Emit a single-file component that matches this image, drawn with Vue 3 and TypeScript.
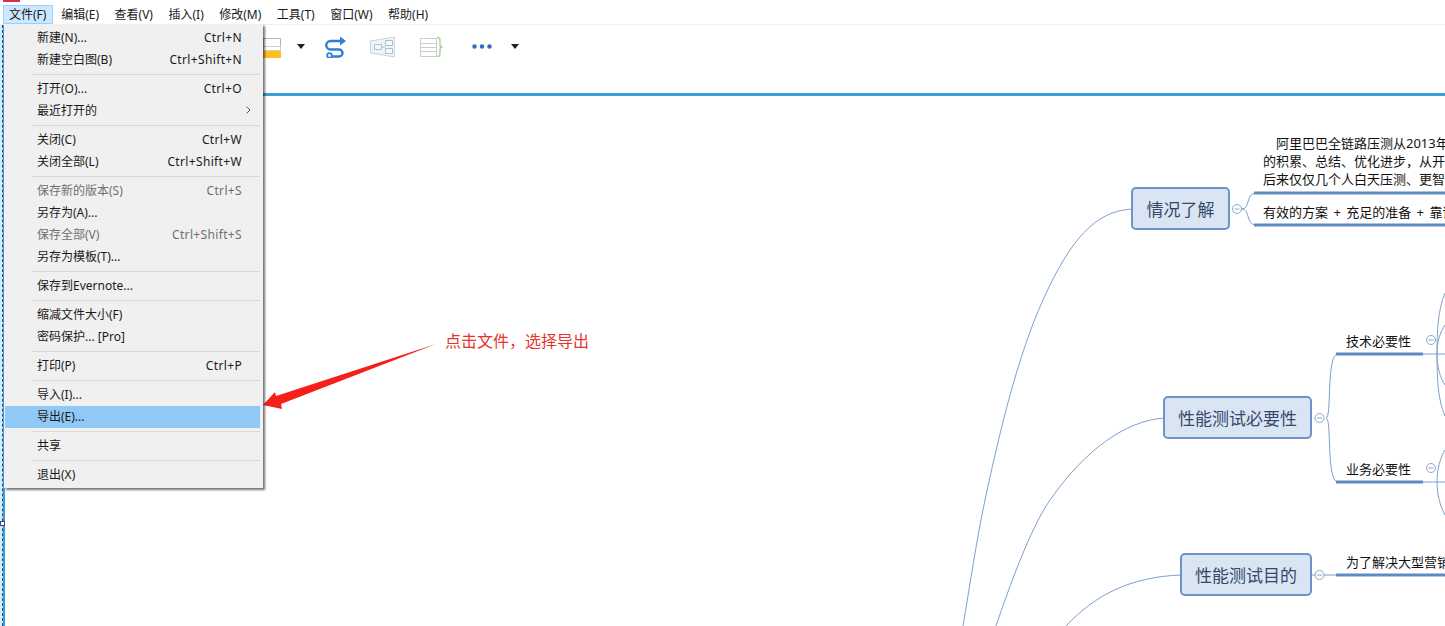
<script setup lang="ts">
interface MenuRow {
  label: string
  key?: string
  disabled?: boolean
  active?: boolean
  sub?: boolean
}

interface MapBox {
  text: string
  x: number
  y: number
  w: number
  h: number
}

interface MapText {
  text: string
  x: number
  y: number
}

const menuBar = ['文件(F)', '编辑(E)', '查看(V)', '插入(I)', '修改(M)', '工具(T)', '窗口(W)', '帮助(H)']

const menuGroups: MenuRow[][] = [
  [
    { label: '新建(N)...', key: 'Ctrl+N' },
    { label: '新建空白图(B)', key: 'Ctrl+Shift+N' }
  ],
  [
    { label: '打开(O)...', key: 'Ctrl+O' },
    { label: '最近打开的', sub: true }
  ],
  [
    { label: '关闭(C)', key: 'Ctrl+W' },
    { label: '关闭全部(L)', key: 'Ctrl+Shift+W' }
  ],
  [
    { label: '保存新的版本(S)', key: 'Ctrl+S', disabled: true },
    { label: '另存为(A)...' },
    { label: '保存全部(V)', key: 'Ctrl+Shift+S', disabled: true },
    { label: '另存为模板(T)...' }
  ],
  [{ label: '保存到Evernote...' }],
  [{ label: '缩减文件大小(F)' }, { label: '密码保护... [Pro]' }],
  [{ label: '打印(P)', key: 'Ctrl+P' }],
  [{ label: '导入(I)...' }, { label: '导出(E)...', active: true }],
  [{ label: '共享' }],
  [{ label: '退出(X)' }]
]

// map coordinates are canvas-relative, the canvas starts at y = 96
const topics: MapBox[] = [
  { text: '情况了解', x: 1131, y: 91, w: 99, h: 43 },
  { text: '性能测试必要性', x: 1163, y: 300, w: 149, h: 43 },
  { text: '性能测试目的', x: 1180, y: 457, w: 132, h: 43 }
]

const notes: MapText[] = [
  { text: '阿里巴巴全链路压测从2013年', x: 1276, y: 38 },
  { text: '的积累、总结、优化进步，从开', x: 1263, y: 56 },
  { text: '后来仅仅几个人白天压测、更智', x: 1263, y: 74 },
  { text: '有效的方案 + 充足的准备 + 靠谱', x: 1263, y: 107 },
  { text: '技术必要性', x: 1346, y: 236 },
  { text: '业务必要性', x: 1346, y: 364 },
  { text: '为了解决大型营销', x: 1346, y: 457 }
]

const thinLines = [
  'M1132 209 C1095 211 1070 240 1043 300 C1018 355 1000 430 985 500 C976.5 540 970 585 963 626',
  'M1164 418 C1125 421 1085 450 1050 500 C1030 529 1010 585 996 626',
  'M1181 575 C1130 577 1095 595 1066 626',
  'M1242 209 C1250 209 1246 193 1256 193',
  'M1242 209 C1250 209 1246 225 1256 225',
  'M1326 418 C1332 418 1326 354 1338 354',
  'M1326 418 C1332 418 1326 482 1338 482',
  'M1312 575 H1336',
  'M1423 354 H1445',
  'M1423 482 H1445',
  'M1445 293 C1438 310 1437 330 1437 354 C1437 380 1438 400 1445 416',
  'M1445 325 C1440 332 1437 342 1437 354 C1437 366 1440 378 1445 385',
  'M1445 450 C1440 458 1437 470 1437 482 C1437 494 1440 506 1445 515'
]

const thickLines = [
  [1254, 193, 1445],
  [1254, 225, 1445],
  [1336, 354, 1423],
  [1336, 482, 1423],
  [1336, 575, 1445]
]

const toggles = [
  [1237, 209],
  [1319.5, 418],
  [1431, 340],
  [1431, 468],
  [1319.5, 575]
]
</script>

<template>
  <div class="app">
    <i class="red-tab"></i>

    <nav class="menubar">
      <span v-for="(item, i) in menuBar" :key="item" class="bar-item" :class="{ open: i === 0 }">{{ item }}</span>
    </nav>

    <div class="toolbar">
      <svg class="tool t-table" width="18" height="22" viewBox="0 0 18 22">
        <rect x="0.5" y="2.5" width="17" height="8" fill="#fff" stroke="#b5b5b5" />
        <rect x="0.5" y="10.5" width="17" height="4" fill="#fff" stroke="#cfcfcf" />
        <rect x="0" y="15" width="18" height="7" fill="#fdbf1d" />
      </svg>
      <svg class="tool t-tri1" width="8" height="5" viewBox="0 0 8 5"><path d="M0 0H8L4 5Z" fill="#222" /></svg>
      <svg class="tool t-route" width="23" height="22" viewBox="0 0 23 22">
        <path d="M20 5H7.5a4 4 0 0 0 0 8.5H16a3.5 3.5 0 0 1 0 7H9" fill="none" stroke="#2b80d2" stroke-width="2.4" />
        <path d="M17 0.5 23 5l-6 4.5Z" fill="#2b80d2" />
        <circle cx="6.5" cy="19.5" r="2.3" fill="#fff" stroke="#2b80d2" stroke-width="1.8" />
      </svg>
      <svg class="tool t-faded" width="25" height="22" viewBox="0 0 25 22">
        <path d="M0.5 5 24.5 1V21L0.5 17Z" fill="#eef4f7" stroke="#c4d6de" />
        <path d="M4.5 8.5h7v5h-7ZM15.5 4.5h7v5h-7ZM15.5 12.5h7v5h-7ZM11.5 11H15.5" fill="#f6fafb" stroke="#a9c2cd" />
      </svg>
      <svg class="tool t-bracket" width="23" height="22" viewBox="0 0 23 22">
        <path d="M0.5 2.5h16v18h-16ZM0.5 7.5h16M0.5 11.5h16M0.5 15.5h16" fill="#fff" stroke="#c9cfcb" />
        <path d="M17 1.5c3 0 3 1 3 4v3c0 1.500 1 2.500 2.500 2.500c-1.500 0-2.500 1-2.500 2.500v3c0 3 0 4-3 4" fill="none" stroke="#a9d0a2" stroke-width="1.4" />
      </svg>
      <svg class="tool t-dots" width="20" height="5" viewBox="0 0 20 5">
        <circle cx="2.500" cy="2.500" r="2.200" fill="#2c6fbb" />
        <circle cx="10" cy="2.500" r="2.200" fill="#2c6fbb" />
        <circle cx="17.500" cy="2.500" r="2.200" fill="#2c6fbb" />
      </svg>
      <svg class="tool t-tri2" width="8" height="5" viewBox="0 0 8 5"><path d="M0 0H8L4 5Z" fill="#222" /></svg>
    </div>

    <main class="canvas">
      <svg class="links" width="1445" height="530" viewBox="0 96 1445 530">
        <path v-for="d in thinLines" :key="d" :d="d" fill="none" stroke="#7f9fd0" stroke-width="1" />
        <line
          v-for="l in thickLines"
          :key="l.join()"
          :x1="l[0]"
          :y1="l[1]"
          :x2="l[2]"
          :y2="l[1]"
          stroke="#5f8bc2"
          stroke-width="3"
        />
        <g v-for="t in toggles" :key="t.join()">
          <circle :cx="t[0]" :cy="t[1]" r="4.500" fill="#fff" stroke="#8ea6c9" />
          <line :x1="t[0] - 2.500" :y1="t[1]" :x2="t[0] + 2.500" :y2="t[1]" stroke="#8ea6c9" />
        </g>
        <polygon points="263,405 275,392 276,396 436,344 281,404 282,409" fill="#f5201c" />
      </svg>

      <div
        v-for="t in topics"
        :key="t.text"
        class="topic"
        :style="{ left: t.x + 'px', top: t.y + 'px', width: t.w + 'px', height: t.h + 'px' }"
      >
        {{ t.text }}
      </div>
      <span
        v-for="n in notes"
        :key="n.text"
        class="note"
        :style="{ left: n.x + 'px', top: n.y + 'px' }"
      >{{ n.text }}</span>
      <span class="callout">点击文件，选择导出</span>

      <i class="handle"></i>
    </main>

    <i class="frame"></i>

    <div class="menu">
      <template v-for="(group, g) in menuGroups" :key="g">
        <div v-if="g > 0" class="sep"></div>
        <div
          v-for="row in group"
          :key="row.label"
          class="row"
          :class="{ disabled: row.disabled, active: row.active }"
        >
          <span>{{ row.label }}</span>
          <span v-if="row.key" class="key">{{ row.key }}</span>
          <svg v-if="row.sub" class="chev" width="5" height="8" viewBox="0 0 5 8">
            <path d="M0.500 0.500 4 4 0.500 7.500" fill="none" stroke="#555" />
          </svg>
        </div>
      </template>
    </div>
  </div>
</template>

<style scoped>
.app {
  position: relative;
  display: flex;
  flex-direction: column;
  width: 1445px;
  height: 626px;
  overflow: hidden;
  background: #fff;
  font-family: "Noto Sans", "Noto Sans CJK SC", sans-serif;
  color: #1a1a1a;
}

.red-tab {
  position: absolute;
  left: 3px;
  top: 0;
  width: 17px;
  height: 2px;
  background: #d9304a;
}

.menubar {
  display: flex;
  align-items: flex-end;
  height: 24px;
  padding-left: 3px;
  border-bottom: 1px solid #f0f0f0;
  font-size: 12px;
  line-height: 19px;
}

.bar-item {
  padding: 0 7.75px;
  height: 19px;
  white-space: nowrap;
}

.bar-item.open {
  padding: 0 7px 0 6px;
  background: #cce8ff;
  box-shadow: inset 0 0 0 1px #99d1ff;
}

.toolbar {
  display: flex;
  align-items: center;
  height: 71px;
  padding: 0 0 25px 263px;
  box-sizing: border-box;
  border-bottom: 3px solid #3a9fd4;
}

.t-tri1 { margin-left: 16px; }
.t-route { margin-left: 18px; }
.t-faded { margin-left: 24px; }
.t-bracket { margin-left: 25px; }
.t-dots { margin-left: 29px; }
.t-tri2 { margin-left: 19px; }

.canvas {
  position: relative;
  flex: 1;
}

.links {
  position: absolute;
  left: 0;
  top: 0;
}

.topic {
  position: absolute;
  display: flex;
  align-items: center;
  justify-content: center;
  box-sizing: border-box;
  background: #dae5f3;
  border: 2px solid #6d93c9;
  border-radius: 5px;
  font-size: 17px;
  color: #34496a;
  white-space: nowrap;
}

.note {
  position: absolute;
  font-size: 13px;
  line-height: 18px;
  color: #111;
  white-space: nowrap;
  word-spacing: 2px;
}

.callout {
  position: absolute;
  left: 445px;
  top: 233px;
  font-size: 16px;
  line-height: 24px;
  color: #e8322a;
  white-space: nowrap;
}

.handle {
  position: absolute;
  left: 0;
  top: 425px;
  width: 3px;
  height: 3px;
  background: #fff;
  border: 1px solid #3c4a78;
  z-index: 2;
}

.frame {
  position: absolute;
  left: 0;
  top: 25px;
  bottom: 0;
  width: 3px;
  background: #d5ebfa;
  border-right: 2px solid #3a9bdc;
}

.frame::after {
  content: "";
  position: absolute;
  left: 2px;
  top: 0;
  bottom: 0;
  border-left: 1px dashed #1d4f86;
}

.menu {
  position: absolute;
  left: 4px;
  top: 24px;
  width: 259px;
  height: 464px;
  padding: 3px 0 2px;
  box-sizing: border-box;
  background: #f0f0f0;
  box-shadow: 2px 2px 2px rgba(0, 0, 0, 0.55);
  font-size: 12px;
}

.row {
  display: flex;
  align-items: center;
  justify-content: space-between;
  height: 22px;
  margin: 0 3px 0 1px;
  padding: 0 18px 2px 32px;
  box-sizing: border-box;
  white-space: nowrap;
}

.row.disabled {
  color: #6f6f6f;
}

.row.active {
  background: #90c8f6;
}

.key {
  letter-spacing: 0.35px;
}

.chev {
  margin-right: -9px;
}

.sep {
  height: 1px;
  margin: 3px 3px 3px 28px;
  background: #d7d7d7;
}
</style>
